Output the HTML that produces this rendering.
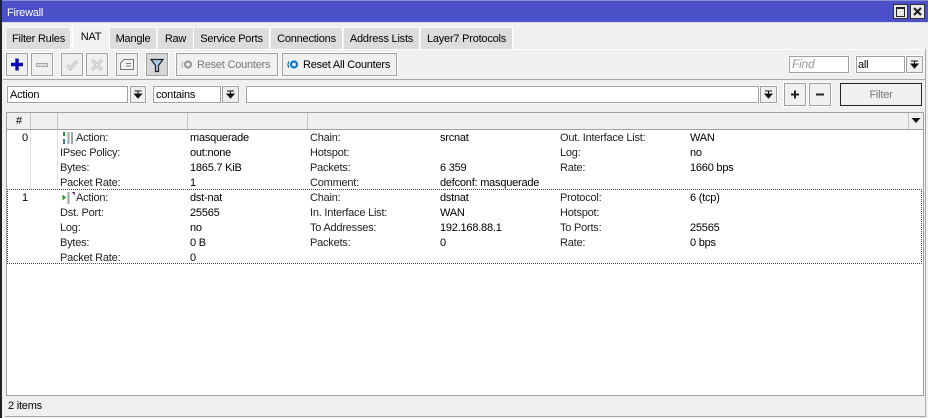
<!DOCTYPE html>
<html><head><meta charset="utf-8">
<style>
html,body{margin:0;padding:0;width:928px;height:418px;overflow:hidden;background:#f0f0f0}
body{position:relative;font:11px/16px "Liberation Sans",sans-serif;letter-spacing:-.22px;color:#000}
div,span.a{position:absolute;box-sizing:border-box;white-space:nowrap}
.t{position:absolute;white-space:nowrap}
.g{color:#222}
.tab{position:absolute;top:27px;height:22px;background:#dcdcdc;border-top:1px solid #f8f8f8;border-right:1px solid #fff;text-align:center;line-height:23px}
.btn{position:absolute;top:53px;height:23px;width:22px;border:1px solid #a0a0a0;background:#f0f0f0;box-shadow:0 0 0 1px #fff}
.inp{position:absolute;background:#fff;border:1px solid #a0a0a0;box-shadow:0 0 0 1px #f8f8f8;line-height:17px;padding-left:2px}
.drop{position:absolute;background:#f0f0f0;border:1px solid #a0a0a0;box-shadow:0 0 0 1px #fff}
svg{position:absolute;overflow:visible}
</style></head><body>
<!-- window frame -->
<div style="left:0;top:0;width:2px;height:418px;background:#222"></div>
<div style="left:2px;top:0;width:926px;height:1px;background:#8a8dd8"></div>
<div style="left:2px;top:1px;width:926px;height:21px;background:#4c50c8"></div>
<div style="left:2px;top:22px;width:926px;height:1px;background:#dcdcf0"></div>
<div class="t" style="left:7px;top:5px;color:#fff">Firewall</div>
<!-- title buttons -->
<div style="left:893px;top:4px;width:15px;height:15px;background:#e8e8e8;border:1px solid #333"></div>
<div style="left:896px;top:7px;width:9px;height:10px;border:1px solid #222;border-top-width:2px"></div>
<div style="left:910px;top:4px;width:15px;height:15px;background:#e8e8e8;border:1px solid #333"></div>
<svg style="left:910px;top:4px" width="15" height="15"><path d="M4 4L11 11M11 4L4 11" stroke="#222" stroke-width="2.2"/></svg>
<!-- tabs -->
<div class="tab" style="left:7px;width:64px">Filter Rules</div>
<div class="tab" style="left:72px;top:24px;width:38px;height:26px;background:#f2f2f2;border-left:1px solid #fff;line-height:24px;z-index:2">NAT</div>
<div class="tab" style="left:110px;width:47px">Mangle</div>
<div class="tab" style="left:158px;width:36px">Raw</div>
<div class="tab" style="left:194px;width:76px">Service Ports</div>
<div class="tab" style="left:271px;width:72px">Connections</div>
<div class="tab" style="left:344px;width:76px">Address Lists</div>
<div class="tab" style="left:421px;width:92px">Layer7 Protocols</div>
<div style="left:3px;top:49px;width:922px;height:1px;background:#fff"></div>
<div style="left:925px;top:49px;width:1px;height:368px;background:#a8a8a8"></div>
<!-- toolbar -->
<div class="btn" style="left:6px"></div>
<svg style="left:6px;top:53px" width="22" height="23"><path d="M11 5.500V17.500M5 11.500H17" stroke="#0a0ab8" stroke-width="3.4"/></svg>
<div class="btn" style="left:31px"></div>
<div style="left:36px;top:63px;width:12px;height:4px;background:#dcdcdc;border:1px solid #a8a8a8"></div>
<div class="btn" style="left:61px"></div>
<svg style="left:61px;top:53px" width="22" height="23"><path d="M6 12L9.500 15.500L16 8" fill="none" stroke="#b8b8b8" stroke-width="3"/><path d="M6 12L9.500 15.500L16 8" fill="none" stroke="#f0f0f0" stroke-width="1.200"/></svg>
<div class="btn" style="left:86px"></div>
<svg style="left:86px;top:53px" width="22" height="23"><path d="M6 7L16 17M16 7L6 17" fill="none" stroke="#b8b8b8" stroke-width="3"/><path d="M6 7L16 17M16 7L6 17" fill="none" stroke="#f0f0f0" stroke-width="1.200"/></svg>
<div class="btn" style="left:116px"></div>
<svg style="left:116px;top:53px" width="22" height="23"><path d="M4.500 16.500V10L8 6.500H17.500V16.500ZM10 10.500H15M10 13H15" fill="#f4f4f4" stroke="#777" stroke-width="1"/></svg>
<div class="btn" style="left:146px;background:#d8d8d8"></div>
<svg style="left:146px;top:53px" width="22" height="23"><path d="M5 6.500H17L12.500 12.500V18.500H9.500V12.500Z" fill="#a8c8e8" stroke="#222" stroke-width="1.200"/></svg>
<div class="btn" style="left:176px;width:102px"></div>
<svg style="left:181px;top:59px" width="12" height="12"><circle cx="7" cy="5.500" r="3" fill="none" stroke="#999" stroke-width="2.200"/><path d="M2 2.500A5 5 0 0 0 2 8.500" fill="none" stroke="#bbb" stroke-width="1.200"/></svg>
<div class="t" style="left:197px;top:57px;color:#777">Reset Counters</div>
<div class="btn" style="left:282px;width:115px"></div>
<svg style="left:287px;top:59px" width="12" height="12"><circle cx="7" cy="5.500" r="3" fill="none" stroke="#0878c8" stroke-width="2.200"/><path d="M2 2.500A5 5 0 0 0 2 8.500" fill="none" stroke="#0a5a9a" stroke-width="1.200"/></svg>
<div class="t" style="left:303px;top:57px;color:#000">Reset All Counters</div>
<div class="inp" style="left:789px;top:56px;width:60px;height:17px;color:#999;font-style:italic;padding-left:2px;font-size:12px;line-height:15px">Find</div>
<div class="inp" style="left:856px;top:56px;width:49px;height:17px;padding-left:1px">all</div>
<div class="drop" style="left:906px;top:56px;width:17px;height:17px"></div>
<svg style="left:907px;top:56px" width="15" height="17"><path d="M4 5H11M7.500 5V9M4 8H11L7.500 12Z" fill="#111" stroke="#111"/></svg>
<div style="left:3px;top:79px;width:922px;height:1px;background:#a8a8a8"></div>
<!-- filter row -->
<div class="inp" style="left:7px;top:86px;width:121px;height:17px;padding-left:2px">Action</div>
<div class="drop" style="left:130px;top:86px;width:16px;height:17px"></div>
<svg style="left:130px;top:86px" width="16" height="17"><path d="M4.500 5H11.500M8 5V9M4.500 8H11.500L8 12Z" fill="#111" stroke="#111"/></svg>
<div class="inp" style="left:153px;top:86px;width:68px;height:17px;padding-left:2px">contains</div>
<div class="drop" style="left:222px;top:86px;width:17px;height:17px"></div>
<svg style="left:222px;top:86px" width="17" height="17"><path d="M5 5H12M8.500 5V9M5 8H12L8.500 12Z" fill="#111" stroke="#111"/></svg>
<div class="inp" style="left:246px;top:86px;width:513px;height:17px"></div>
<div class="drop" style="left:760px;top:86px;width:17px;height:17px"></div>
<svg style="left:760px;top:86px" width="17" height="17"><path d="M5 5H12M8.500 5V9M5 8H12L8.500 12Z" fill="#111" stroke="#111"/></svg>
<div class="drop" style="left:784px;top:83px;width:22px;height:23px"></div>
<svg style="left:784px;top:83px" width="22" height="23"><path d="M11 7.500V15.500M7 11.500H15" stroke="#222" stroke-width="2"/></svg>
<div class="drop" style="left:809px;top:83px;width:22px;height:23px"></div>
<svg style="left:809px;top:83px" width="22" height="23"><path d="M7 11.500H15" stroke="#222" stroke-width="2"/></svg>
<div style="left:840px;top:83px;width:82px;height:23px;border:1px solid #222;background:#f0f0f0;color:#777;text-align:center;line-height:22px">Filter</div>
<!-- table -->
<div style="left:6px;top:112px;width:918px;height:284px;background:#fff;border:1px solid #a0a0a0"></div>
<div style="left:7px;top:113px;width:916px;height:17px;background:#f0f0f0;border-bottom:1px solid #a0a0a0"></div>
<div style="left:30px;top:113px;width:1px;height:16px;background:#c4c4c4"></div>
<div style="left:57px;top:113px;width:1px;height:16px;background:#c4c4c4"></div>
<div style="left:187px;top:113px;width:1px;height:16px;background:#c4c4c4"></div>
<div style="left:307px;top:113px;width:1px;height:16px;background:#c4c4c4"></div>
<div style="left:908px;top:113px;width:1px;height:16px;background:#c4c4c4"></div>
<div class="t" style="left:16px;top:113px">#</div>
<svg style="left:909px;top:113px" width="14" height="16"><path d="M2.500 5H11.500L7 10Z" fill="#111"/></svg>
<div style="left:30px;top:130px;width:1px;height:59px;background:#e2e2e2"></div>
<div style="left:57px;top:130px;width:1px;height:59px;background:#e2e2e2"></div>
<!-- row 0 -->
<div class="t" style="left:22px;top:130px">0</div>
<svg style="left:62px;top:131px" width="14" height="14"><path d="M2 1V5" stroke="#1f9a1f" stroke-width="2"/><path d="M2 8V13" stroke="#3a7a9a" stroke-width="2"/><path d="M6.500 1V13M10 1V13" stroke="#9aa8a0" stroke-width="2"/></svg>
<div class="t g" style="left:76px;top:130px">Action:</div><div class="t" style="left:190px;top:130px">masquerade</div>
<div class="t g" style="left:310px;top:130px">Chain:</div><div class="t" style="left:440px;top:130px">srcnat</div>
<div class="t g" style="left:560px;top:130px">Out. Interface List:</div><div class="t" style="left:690px;top:130px">WAN</div>
<div class="t g" style="left:60px;top:145px">IPsec Policy:</div><div class="t" style="left:190px;top:145px">out:none</div>
<div class="t g" style="left:310px;top:145px">Hotspot:</div>
<div class="t g" style="left:560px;top:145px">Log:</div><div class="t" style="left:690px;top:145px">no</div>
<div class="t g" style="left:60px;top:160px">Bytes:</div><div class="t" style="left:190px;top:160px">1865.7 KiB</div>
<div class="t g" style="left:310px;top:160px">Packets:</div><div class="t" style="left:440px;top:160px">6 359</div>
<div class="t g" style="left:560px;top:160px">Rate:</div><div class="t" style="left:690px;top:160px">1660 bps</div>
<div class="t g" style="left:60px;top:175px">Packet Rate:</div><div class="t" style="left:190px;top:175px">1</div>
<div class="t g" style="left:310px;top:175px">Comment:</div><div class="t" style="left:440px;top:175px">defconf: masquerade</div>
<!-- row 1 -->
<div style="left:7px;top:189px;width:915px;height:75px;border:1px dotted #444"></div>
<div class="t" style="left:22px;top:190px">1</div>
<svg style="left:62px;top:191px" width="14" height="14"><path d="M0.500 3.500L4 6.500L0.500 9.500Z" fill="#1f9a1f"/><path d="M6.500 1V13" stroke="#9aa8a0" stroke-width="2"/><path d="M9.500 1H13V4.500Z" fill="#7a3a8a"/></svg>
<div class="t g" style="left:76px;top:190px">Action:</div><div class="t" style="left:190px;top:190px">dst-nat</div>
<div class="t g" style="left:310px;top:190px">Chain:</div><div class="t" style="left:440px;top:190px">dstnat</div>
<div class="t g" style="left:560px;top:190px">Protocol:</div><div class="t" style="left:690px;top:190px">6 (tcp)</div>
<div class="t g" style="left:60px;top:205px">Dst. Port:</div><div class="t" style="left:190px;top:205px">25565</div>
<div class="t g" style="left:310px;top:205px">In. Interface List:</div><div class="t" style="left:440px;top:205px">WAN</div>
<div class="t g" style="left:560px;top:205px">Hotspot:</div>
<div class="t g" style="left:60px;top:220px">Log:</div><div class="t" style="left:190px;top:220px">no</div>
<div class="t g" style="left:310px;top:220px">To Addresses:</div><div class="t" style="left:440px;top:220px">192.168.88.1</div>
<div class="t g" style="left:560px;top:220px">To Ports:</div><div class="t" style="left:690px;top:220px">25565</div>
<div class="t g" style="left:60px;top:235px">Bytes:</div><div class="t" style="left:190px;top:235px">0 B</div>
<div class="t g" style="left:310px;top:235px">Packets:</div><div class="t" style="left:440px;top:235px">0</div>
<div class="t g" style="left:560px;top:235px">Rate:</div><div class="t" style="left:690px;top:235px">0 bps</div>
<div class="t g" style="left:60px;top:250px">Packet Rate:</div><div class="t" style="left:190px;top:250px">0</div>
<!-- status -->
<div class="t" style="left:8px;top:398px">2 items</div>
<div style="left:5px;top:416px;width:921px;height:1px;background:#a8a8a8"></div>
</body></html>
